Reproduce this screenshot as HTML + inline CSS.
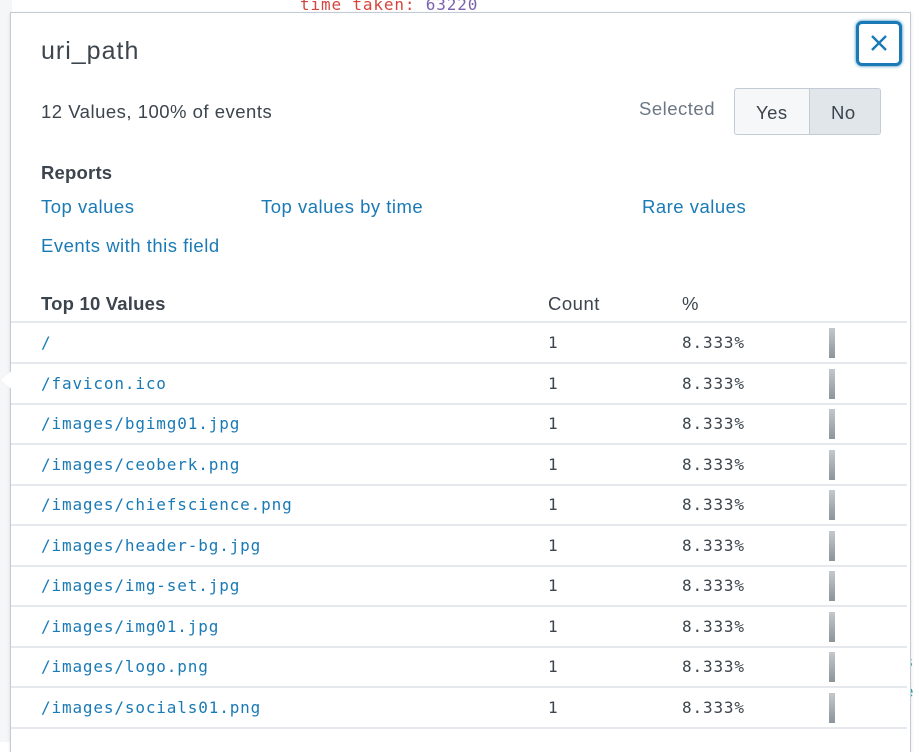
<!DOCTYPE html>
<html><head><style>
*{margin:0;padding:0;box-sizing:border-box}
body{width:919px;height:742px;overflow:hidden;background:#fff;position:relative;font-family:"Liberation Sans",sans-serif;color:#3c444d}
.a{position:absolute;white-space:nowrap}
.s{font-size:18.5px;letter-spacing:0.5px}
.bg1{position:absolute;left:0;top:0;width:12px;height:742px;background:#f5f6f7}
.panel{position:absolute;left:10px;top:12px;width:901px;height:740px;background:#fff;border:1px solid #c3cbd4;border-bottom:none;box-shadow:0 1px 3px rgba(0,0,0,.12)}
.link{color:#1a7ab5}
.mono{font-family:"DejaVu Sans Mono","Liberation Mono",monospace;font-size:16px;letter-spacing:0.85px}
.line{position:absolute;left:11px;width:896px;height:2px;background:#e5e9ee}
.bar{position:absolute;left:829px;width:6px;height:30px;background:linear-gradient(#c3c8cd,#8b949c)}
</style></head><body>
<div class="bg1"></div>
<div class="a mono" style="left:300px;top:-5px;color:#d6453d;">time_taken: <span style="color:#7a62b0">63220</span></div>
<div class="a" style="left:904px;top:652px;color:#2aa6a6;font-size:17px">s</div>
<div class="a" style="left:904px;top:682px;color:#2aa6a6;font-size:17px">e</div>
<div class="panel"></div>
<div class="a" style="left:1px;top:368px;width:14px;height:24px;background:#fff;clip-path:polygon(100% 0,0 50%,100% 100%)"></div>
<div class="a" style="left:41px;top:37px;font-size:25px;letter-spacing:1px;color:#3c444d">uri_path</div>
<div class="a" style="left:856px;top:21px;width:46px;height:45px;border:3px solid #1a7ab5;border-radius:6px;background:#fff;box-shadow:0 0 3px #1a7ab5"></div>
<svg class="a" style="left:870px;top:34px" width="18" height="18"><path d="M2 2L16 16M16 2L2 16" stroke="#1a7ab5" stroke-width="2.4"/></svg>
<div class="a s" style="left:41px;top:101px">12 Values, 100% of events</div>
<div class="a s" style="left:639px;top:98px;color:#6b7785">Selected</div>
<div class="a" style="left:734px;top:88px;width:147px;height:47px;border:1px solid #c3cbd4;border-radius:3px;background:#f5f7f8;overflow:hidden">
<div class="a" style="left:74px;top:0;width:73px;height:47px;background:#e1e6eb;border-left:1px solid #c3cbd4"></div>
<div class="a s" style="left:21px;top:13px">Yes</div>
<div class="a s" style="left:96px;top:13px">No</div>
</div>
<div class="a s" style="left:41px;top:162px;font-weight:bold;letter-spacing:0.2px">Reports</div>
<div class="a link s" style="left:41px;top:196px">Top values</div>
<div class="a link s" style="left:261px;top:196px">Top values by time</div>
<div class="a link s" style="left:642px;top:196px">Rare values</div>
<div class="a link s" style="left:41px;top:235px">Events with this field</div>
<div class="a s" style="left:41px;top:293px;font-weight:bold;letter-spacing:0.2px">Top 10 Values</div>
<div class="a s" style="left:548px;top:293px">Count</div>
<div class="a s" style="left:682px;top:293px">%</div>
<div class="line" style="top:321px"></div>
<div id="rows"></div>
<script>
var v=["/","/favicon.ico","/images/bgimg01.jpg","/images/ceoberk.png","/images/chiefscience.png","/images/header-bg.jpg","/images/img-set.jpg","/images/img01.jpg","/images/logo.png","/images/socials01.png"];
var h="";
for(var i=0;i<v.length;i++){var t=322+i*40.5;
h+='<div class="a mono link" style="left:41px;top:'+(t+11)+'px">'+v[i]+'</div>';
h+='<div class="a mono" style="left:548px;top:'+(t+11)+'px">1</div>';
h+='<div class="a mono" style="left:682px;top:'+(t+11)+'px">8.333%</div>';
h+='<div class="bar" style="top:'+(t+6)+'px"></div>';
h+='<div class="line" style="top:'+(t+40)+'px"></div>';}
document.getElementById("rows").innerHTML=h;
</script>
</body></html>
